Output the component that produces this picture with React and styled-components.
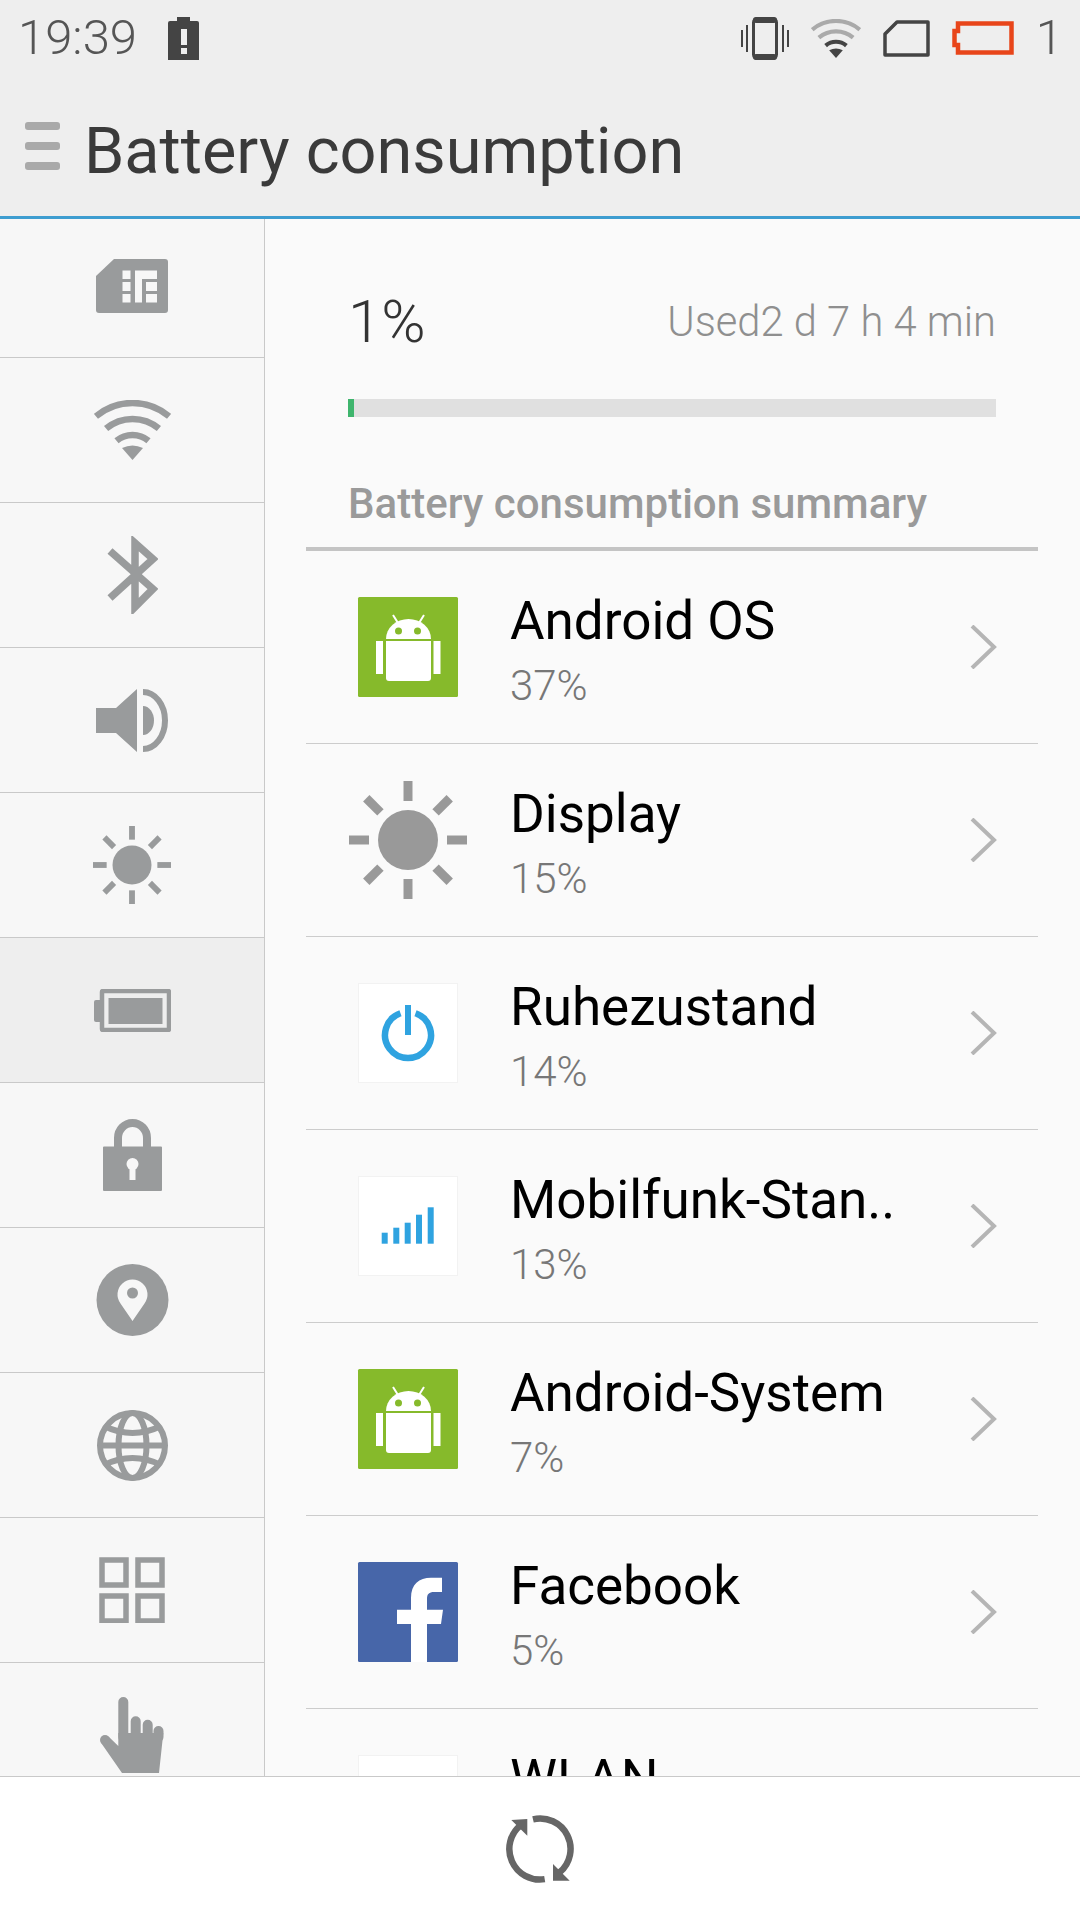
import React from "react";
import styled, { createGlobalStyle } from "styled-components";

const GlobalStyle = createGlobalStyle`
  html, body {
    margin: 0;
    padding: 0;
    background: #fff;
    font-family: Roboto, "Liberation Sans", sans-serif;
  }
  * { box-sizing: border-box; }
`;

const Screen = styled.div`
  width: 1080px;
  height: 1920px;
  display: flex;
  flex-direction: column;
  overflow: hidden;
`;

const Header = styled.header`
  height: 219px;
  flex: none;
  background: #eeeeee;
  border-bottom: 3px solid #3e9dd0;
`;

const StatusBar = styled.div`
  height: 76px;
  display: flex;
  align-items: center;
  justify-content: space-between;
  padding: 0 17px 0 18px;
  color: #555;
`;

const StatusGroup = styled.div`
  display: flex;
  align-items: center;
  gap: ${(p) => p.$gap}px;
`;

const Clock = styled.span`
  font-size: 49px;
  font-weight: 300;
  line-height: 76px;
`;

const StatusCount = styled.span`
  font-size: 49px;
  font-weight: 300;
  line-height: 76px;
`;

const TitleBar = styled.div`
  height: 140px;
  display: flex;
  align-items: center;
  padding-left: 25px;
`;

const MenuBars = styled.div`
  width: 35px;
  height: 48px;
  display: flex;
  flex-direction: column;
  justify-content: space-between;
  margin-right: 24px;
  span {
    height: 8px;
    border-radius: 3px;
    background: #a9a9a9;
  }
`;

const Title = styled.h1`
  margin: 0;
  padding-top: 10px;
  font-size: 64.8px;
  font-weight: 400;
  color: #3a3a3a;
  line-height: 80px;
`;

const Body = styled.main`
  flex: 1;
  min-height: 0;
  display: flex;
  overflow: hidden;
  background: #fafafa;
`;

const Sidebar = styled.nav`
  width: 265px;
  flex: none;
  background: #f7f7f7;
  border-right: 1px solid #c9c9c9;
`;

const SideItem = styled.div`
  height: 145px;
  display: flex;
  align-items: center;
  justify-content: center;
  border-bottom: 1px solid #c9c9c9;
  background: ${(p) => (p.$active ? "#eeeeee" : "transparent")};
  &:first-child {
    height: 139px;
    padding-bottom: 5px;
  }
`;

const Content = styled.section`
  flex: 1;
  min-width: 0;
  padding: 0 42px 0 41px;
`;

const Summary = styled.div`
  padding: 0 42px;
`;

const LevelRow = styled.div`
  height: 180px;
  padding-bottom: 42px;
  display: flex;
  align-items: flex-end;
  justify-content: space-between;
`;

const Level = styled.div`
  font-size: 60px;
  font-weight: 300;
  color: #333;
  line-height: 70px;
`;

const Used = styled.div`
  font-size: 41.7px;
  font-weight: 300;
  color: #8f8f8f;
  line-height: 70px;
`;

const Track = styled.div`
  height: 18px;
  background: #e0e0e0;
`;

const Fill = styled.div`
  height: 100%;
  background: #3fb56d;
`;

const SummaryTitle = styled.h2`
  margin: 0;
  padding-top: 57px;
  font-size: 42px;
  font-weight: 500;
  color: #9a9a9a;
  line-height: 60px;
  height: 130px;
`;

const List = styled.div`
  border-top: 4px solid #c4c4c4;
`;

const Row = styled.div`
  height: 193px;
  display: flex;
  align-items: center;
  padding: 0 41px 0 52px;
  border-bottom: 1px solid #cccccc;
`;

const AppIcon = styled.svg`
  width: 100px;
  height: 100px;
  flex: none;
  overflow: visible;
`;

const RowText = styled.div`
  flex: 1;
  min-width: 0;
  margin-left: 52px;
  padding-top: 7px;
`;

const RowName = styled.div`
  font-size: 53px;
  font-weight: 400;
  color: #000;
  line-height: 66px;
  white-space: nowrap;
`;

const RowValue = styled.div`
  height: 54px;
  margin-top: 5px;
  font-size: 42px;
  font-weight: 300;
  color: #777;
  line-height: 54px;
`;

const Footer = styled.footer`
  height: 144px;
  flex: none;
  display: flex;
  align-items: center;
  justify-content: center;
  background: #fff;
  border-top: 1px solid #c9c9c9;
`;

const grey = "#999b9c";

const SimIcon = () => (
  <svg width="72" height="54" viewBox="0 0 72 54">
    <path d="M3 54a3 3 0 0 1-3-3V17L18 0h51a3 3 0 0 1 3 3v48a3 3 0 0 1-3 3z" fill={grey} />
    <g fill="#f7f7f7">
      <rect x="26.5" y="11.5" width="8" height="8.5" />
      <rect x="26.5" y="23" width="8" height="9" />
      <rect x="26.5" y="35" width="8" height="8.5" />
      <path d="M39 11.5h22V20H46v23.5h-7z" />
      <rect x="50" y="23" width="11" height="9" />
      <rect x="50" y="35" width="11" height="8.5" />
    </g>
  </svg>
);

const WifiIcon = ({ width, height, outer = grey, inner = grey }) => (
  <svg width={width} height={height} viewBox="0 0 77 60">
    <g fill="none" strokeWidth="6.5">
      <path d="M1.9 16.3a57 57 0 0 1 73.200 0" stroke={outer} />
      <path d="M12.100 28.600a41 41 0 0 1 52.800 0" stroke={outer} />
      <path d="M22.500 40.800a25 25 0 0 1 32 0" stroke={inner} />
    </g>
    <path d="M38.500 60L28 48q10.500-5 21 0z" fill={inner} />
  </svg>
);

const BluetoothIcon = () => (
  <svg width="51" height="78" viewBox="0 0 51 78">
    <path d="M3 15l43 38-18 18V7l18 16L3 62" fill="none" stroke={grey} strokeWidth="7.500" />
  </svg>
);

const VolumeIcon = () => (
  <svg width="72" height="63" viewBox="0 0 72 63">
    <path d="M0 19h20L41 0v63L20 44H0z" fill={grey} />
    <path d="M47 17a11 14.500 0 0 1 0 29z" fill={grey} />
    <path d="M47 3a22 28.500 0 0 1 0 57" fill="none" stroke={grey} strokeWidth="6" />
  </svg>
);

const sunRays = [0, 45, 90, 135, 180, 225, 270, 315];

const SunIcon = ({ size, fill = grey }) => (
  <svg width={size} height={size} viewBox="-60 -60 120 120">
    <circle r="30" fill={fill} />
    {sunRays.map((angle) => (
      <rect key={angle} x="-4.500" y="-60" width="9" height="21" fill={fill} transform={`rotate(${angle})`} />
    ))}
  </svg>
);

const BatteryIcon = () => (
  <svg width="77" height="43" viewBox="0 0 77 43">
    <rect x="0" y="11" width="8" height="22" rx="2" fill={grey} />
    <rect x="8" y="2" width="67" height="39" rx="1" fill="none" stroke={grey} strokeWidth="4.500" />
    <rect x="14.500" y="9" width="54" height="26" fill={grey} />
  </svg>
);

const LockIcon = () => (
  <svg width="59" height="72" viewBox="0 0 59 72">
    <path d="M15 30V19a14.500 15 0 0 1 29 0v11" fill="none" stroke={grey} strokeWidth="8" />
    <path d="M1 27.500h57a1 1 0 0 1 1 1V71a1 1 0 0 1-1 1H1a1 1 0 0 1-1-1V28.500a1 1 0 0 1 1-1z" fill={grey} />
    <circle cx="29.500" cy="45" r="6" fill="#f7f7f7" />
    <rect x="26.500" y="46" width="6" height="15" fill="#f7f7f7" />
  </svg>
);

const PinIcon = () => (
  <svg width="73" height="72" viewBox="0 0 73 72">
    <circle cx="36.500" cy="36" r="36" fill={grey} />
    <path d="M36.500 57L24.500 39.500a15 15 0 1 1 24 0z" fill="#f7f7f7" />
    <circle cx="36.500" cy="29" r="5.500" fill={grey} />
  </svg>
);

const GlobeIcon = () => (
  <svg width="71" height="71" viewBox="0 0 71 71">
    <g fill="none" stroke={grey} strokeWidth="6">
      <circle cx="35.500" cy="35.500" r="32.500" />
      <ellipse cx="35.500" cy="35.500" rx="14" ry="32.500" />
      <path d="M3 35.500h65M7 16q28.500 14 57 0M7 55q28.500-14 57 0" />
    </g>
  </svg>
);

const GridIcon = () => (
  <svg width="66" height="66" viewBox="0 0 66 66">
    <g fill="none" stroke={grey} strokeWidth="5.500">
      <rect x="3" y="3" width="24" height="25" />
      <rect x="39" y="3" width="24" height="25" />
      <rect x="3" y="39" width="24" height="25" />
      <rect x="39" y="39" width="24" height="25" />
    </g>
  </svg>
);

const HandIcon = () => (
  <svg width="64" height="77" viewBox="0 0 64 77">
    <g stroke={grey} strokeWidth="10" strokeLinecap="round">
      <path d="M23.300 5v35M35.700 24.300V40M47.700 27.700V40M58.500 34v6" />
    </g>
    <circle cx="5" cy="43" r="5" fill={grey} />
    <path d="M18.300 36h45L59 76H22L1.500 46.500l7-7 9.800 9.500z" fill={grey} />
  </svg>
);

const RefreshIcon = () => (
  <svg width="68" height="68" viewBox="-34 -34 68 68">
    <g fill="none" stroke="#666" strokeWidth="6.500">
      <path d="M-19-24A30.500 30.500 0 0 0 4.700 30.100" />
      <path d="M-7-29.700A30.500 30.500 0 0 1 19.700 23.300" />
    </g>
    <path d="M-28.700-29L-12.700-30V-13.300zM13 15V31.700H29.700z" fill="#666" />
  </svg>
);

const AndroidGlyph = () => (
  <>
    <rect width="100" height="100" rx="1.500" fill="#86ba2b" />
    <g fill="#fff">
      <path d="M28 42a22.500 20 0 0 1 45 0z" />
      <path d="M28 44h45v37a3 3 0 0 1-3 3H31a3 3 0 0 1-3-3z" />
      <rect x="18" y="44" width="7" height="33" />
      <rect x="75.500" y="44" width="7" height="33" />
    </g>
    <path d="M35 18l5 8M66 18l-5 8" stroke="#fff" strokeWidth="2" />
    <circle cx="40.500" cy="34" r="3.500" fill="#86ba2b" />
    <circle cx="59.500" cy="34" r="3.500" fill="#86ba2b" />
  </>
);

const SunGlyph = () => (
  <g fill="#999" transform="translate(50 50)">
    <circle r="30" />
    {sunRays.map((angle) => (
      <rect key={angle} x="-4.500" y="-59" width="9" height="20" transform={`rotate(${angle})`} />
    ))}
  </g>
);

const WhiteTile = () => (
  <rect x="0.500" y="0.500" width="99" height="99" fill="#fff" stroke="#f2f2f2" />
);

const PowerGlyph = () => (
  <>
    <WhiteTile />
    <path d="M42.500 30.300a23 23 0 1 0 15 0" fill="none" stroke="#2fa3e0" strokeWidth="6.500" />
    <rect x="47" y="22" width="6" height="30" fill="#2fa3e0" />
  </>
);

const SignalGlyph = () => (
  <>
    <WhiteTile />
    <g fill="#2fa3e0">
      <rect x="23.700" y="56.700" width="6" height="11" />
      <rect x="35.300" y="51.700" width="6" height="16" />
      <rect x="46.700" y="46.700" width="6" height="21" />
      <rect x="58" y="38.700" width="6" height="29" />
      <rect x="69.700" y="31.300" width="6" height="36.400" />
    </g>
  </>
);

const FacebookGlyph = () => (
  <>
    <rect width="100" height="100" rx="1.500" fill="#4766a9" />
    <path
      d="M53 100V62H39V47.700h14V36c0-14 8-20.300 20-20.300h11V30h-8c-5 0-7 2-7 7v10.700h16L83 62H69v38z"
      fill="#fff"
    />
  </>
);

const sideItems = [
  { key: "sim", icon: <SimIcon /> },
  { key: "wifi", icon: <WifiIcon width={77} height={60} /> },
  { key: "bluetooth", icon: <BluetoothIcon /> },
  { key: "volume", icon: <VolumeIcon /> },
  { key: "display", icon: <SunIcon size={78} /> },
  { key: "battery", icon: <BatteryIcon />, active: true },
  { key: "lock", icon: <LockIcon /> },
  { key: "location", icon: <PinIcon /> },
  { key: "globe", icon: <GlobeIcon /> },
  { key: "apps", icon: <GridIcon /> },
  { key: "gesture", icon: <HandIcon /> },
];

const apps = [
  { name: "Android OS", value: "37%", glyph: <AndroidGlyph /> },
  { name: "Display", value: "15%", glyph: <SunGlyph /> },
  { name: "Ruhezustand", value: "14%", glyph: <PowerGlyph /> },
  { name: "Mobilfunk-Stan..", value: "13%", glyph: <SignalGlyph /> },
  { name: "Android-System", value: "7%", glyph: <AndroidGlyph /> },
  { name: "Facebook", value: "5%", glyph: <FacebookGlyph /> },
  { name: "WLAN", value: "", glyph: <WhiteTile /> },
];

const App = () => {
  return (
    <Screen>
      <GlobalStyle />
      <Header>
        <StatusBar>
          <StatusGroup $gap={31}>
            <Clock>19:39</Clock>
            <svg width="31" height="43" viewBox="0 0 31 43">
              <path d="M9 0h13v4h7a2 2 0 0 1 2 2v37H0V6a2 2 0 0 1 2-2h7z" fill="#444" />
              <rect x="13" y="12" width="6" height="16" fill="#eee" />
              <rect x="13" y="31" width="6" height="6" fill="#eee" />
            </svg>
          </StatusGroup>
          <StatusGroup $gap={22}>
            <svg width="48" height="43" viewBox="0 0 48 43">
              <rect x="12.500" y="1.500" width="23" height="40" rx="4" fill="none" stroke="#444" strokeWidth="3" />
              <rect x="12" y="0" width="24" height="6" rx="3" fill="#444" />
              <rect x="12" y="37" width="24" height="6" rx="3" fill="#444" />
              <path d="M1 13v17M6 8v27M42 8v27M47 13v17" stroke="#444" strokeWidth="2" />
            </svg>
            <WifiIcon width={50} height={39} outer="#aaaaaa" inner="#444" />
            <svg width="47" height="37" viewBox="0 0 47 37">
              <path d="M14 2h31v33H2V14z" fill="none" stroke="#444" strokeWidth="3.500" strokeLinejoin="round" />
            </svg>
            <svg width="62" height="34" viewBox="0 0 62 34">
              <path d="M6 2.500h53.500v29H6V24H2.500V10H6z" fill="none" stroke="#e8451a" strokeWidth="4.500" />
            </svg>
            <StatusCount>1</StatusCount>
          </StatusGroup>
        </StatusBar>
        <TitleBar>
          <MenuBars>
            <span />
            <span />
            <span />
          </MenuBars>
          <Title>Battery consumption</Title>
        </TitleBar>
      </Header>
      <Body>
        <Sidebar>
          {sideItems.map((item) => (
            <SideItem key={item.key} $active={item.active}>
              {item.icon}
            </SideItem>
          ))}
        </Sidebar>
        <Content>
          <Summary>
            <LevelRow>
              <Level>1%</Level>
              <Used>Used2 d 7 h 4 min</Used>
            </LevelRow>
            <Track>
              <Fill style={{ width: "1%" }} />
            </Track>
            <SummaryTitle>Battery consumption summary</SummaryTitle>
          </Summary>
          <List>
            {apps.map((app) => (
              <Row key={app.name}>
                <AppIcon viewBox="0 0 100 100">{app.glyph}</AppIcon>
                <RowText>
                  <RowName>{app.name}</RowName>
                  <RowValue>{app.value}</RowValue>
                </RowText>
                <svg width="27" height="44" viewBox="0 0 27 44">
                  <path d="M2 1l22 21L2 43" fill="none" stroke="#b5b5b5" strokeWidth="4" />
                </svg>
              </Row>
            ))}
          </List>
        </Content>
      </Body>
      <Footer>
        <RefreshIcon />
      </Footer>
    </Screen>
  );
};

export default App;
